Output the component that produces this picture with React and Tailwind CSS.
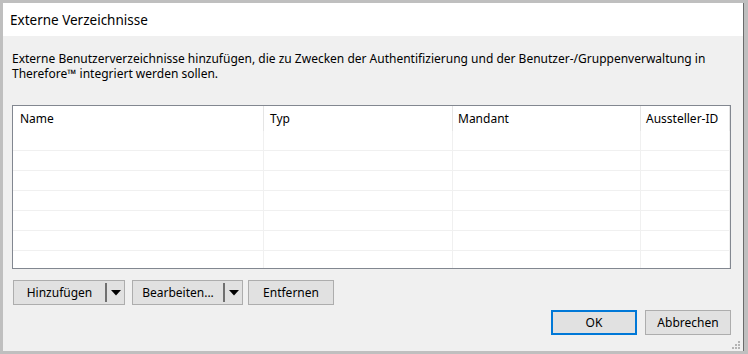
import React from "react";

const FONT = { fontFamily: '"Noto Sans", "Liberation Sans", Arial, sans-serif' };

const COLS = [
  { label: "Name", w: "w-[251px]", pl: "pl-[7px]" },
  { label: "Typ", w: "w-[189px]", pl: "pl-[6px]" },
  { label: "Mandant", w: "w-[188px]", pl: "pl-[5px]" },
  { label: "Aussteller-ID", w: "w-[89px]", pl: "pl-[5px]" },
];

function SplitButton({ label, w }) {
  return (
    <button className={`flex h-[25px] ${w} items-center border border-[#adadad] bg-[#e1e1e1] text-[12px] text-black`}>
      <span className="flex-1 text-center">{label}</span>
      <span className="h-[19px] w-[2px] bg-[#707070]" />
      <span className="flex w-[17px] items-center justify-center">
        <svg width="10" height="6" viewBox="0 0 10 6">
          <path d="M0 0H10L5 5.5Z" fill="#000" />
        </svg>
      </span>
    </button>
  );
}

function Button({ label, w, primary }) {
  return (
    <button
      className={`flex h-[25px] ${w} items-center justify-center bg-[#e1e1e1] text-[12px] text-black ${
        primary ? "border-2 border-[#0078d7]" : "border border-[#adadad]"
      }`}
    >
      {label}
    </button>
  );
}

export default function App() {
  const rows = Array.from({ length: 7 });
  return (
    <div style={FONT} className="h-[354px] w-[748px] bg-[#bfbfbf] pb-[3px] pl-[3px] pr-[4px] pt-[3px]">
      <div className="flex h-full flex-col border-r border-[#6b6b6b]">
        <div className="flex h-[33px] items-center bg-white pl-[7px] pt-[1px] text-[13.5px] text-black">
          Externe Verzeichnisse
        </div>
        <div className="relative flex flex-1 flex-col bg-[#f0f0f0] pl-[9px] pt-[15px]">
          <p className="w-[715px] text-[12px] leading-[15px] text-black">
            Externe Benutzerverzeichnisse hinzufügen, die zu Zwecken der Authentifizierung und der
            Benutzer-/Gruppenverwaltung in Therefore™ integriert werden sollen.
          </p>

          <div className="mt-[24px] h-[164px] w-[719px] overflow-hidden border border-[#828790] bg-white">
            <div className="flex h-[25px] text-[12px] text-black">
              {COLS.map((c) => (
                <div key={c.label} className={`${c.w} ${c.pl} flex items-center border-r border-[#e5e5e5]`}>
                  {c.label}
                </div>
              ))}
            </div>
            {rows.map((_, i) => (
              <div key={i} className="flex h-[20px] border-b border-[#f0f0f0]">
                {COLS.map((c) => (
                  <div key={c.label} className={`${c.w} border-r border-[#f0f0f0]`} />
                ))}
              </div>
            ))}
          </div>

          <div className="mt-[11px] flex pl-[1px]">
            <SplitButton label="Hinzufügen" w="w-[112px]" />
            <div className="ml-[7px]">
              <SplitButton label="Bearbeiten..." w="w-[111px]" />
            </div>
            <div className="ml-[5px]">
              <Button label="Entfernen" w="w-[86px]" />
            </div>
          </div>

          <div className="mt-[5px] flex w-[719px] justify-end gap-[8px]">
            <Button label="OK" w="w-[86px]" primary />
            <Button label="Abbrechen" w="w-[86px]" />
          </div>

          <svg className="absolute bottom-[1px] right-[2px]" width="10" height="10" viewBox="0 0 10 10">
            <rect x="7" y="1" width="2" height="2" fill="#b4b4b4" />
            <rect x="4" y="4" width="2" height="2" fill="#b4b4b4" />
            <rect x="7" y="4" width="2" height="2" fill="#b4b4b4" />
            <rect x="1" y="7" width="2" height="2" fill="#b4b4b4" />
            <rect x="4" y="7" width="2" height="2" fill="#b4b4b4" />
            <rect x="7" y="7" width="2" height="2" fill="#b4b4b4" />
          </svg>
        </div>
      </div>
    </div>
  );
}
